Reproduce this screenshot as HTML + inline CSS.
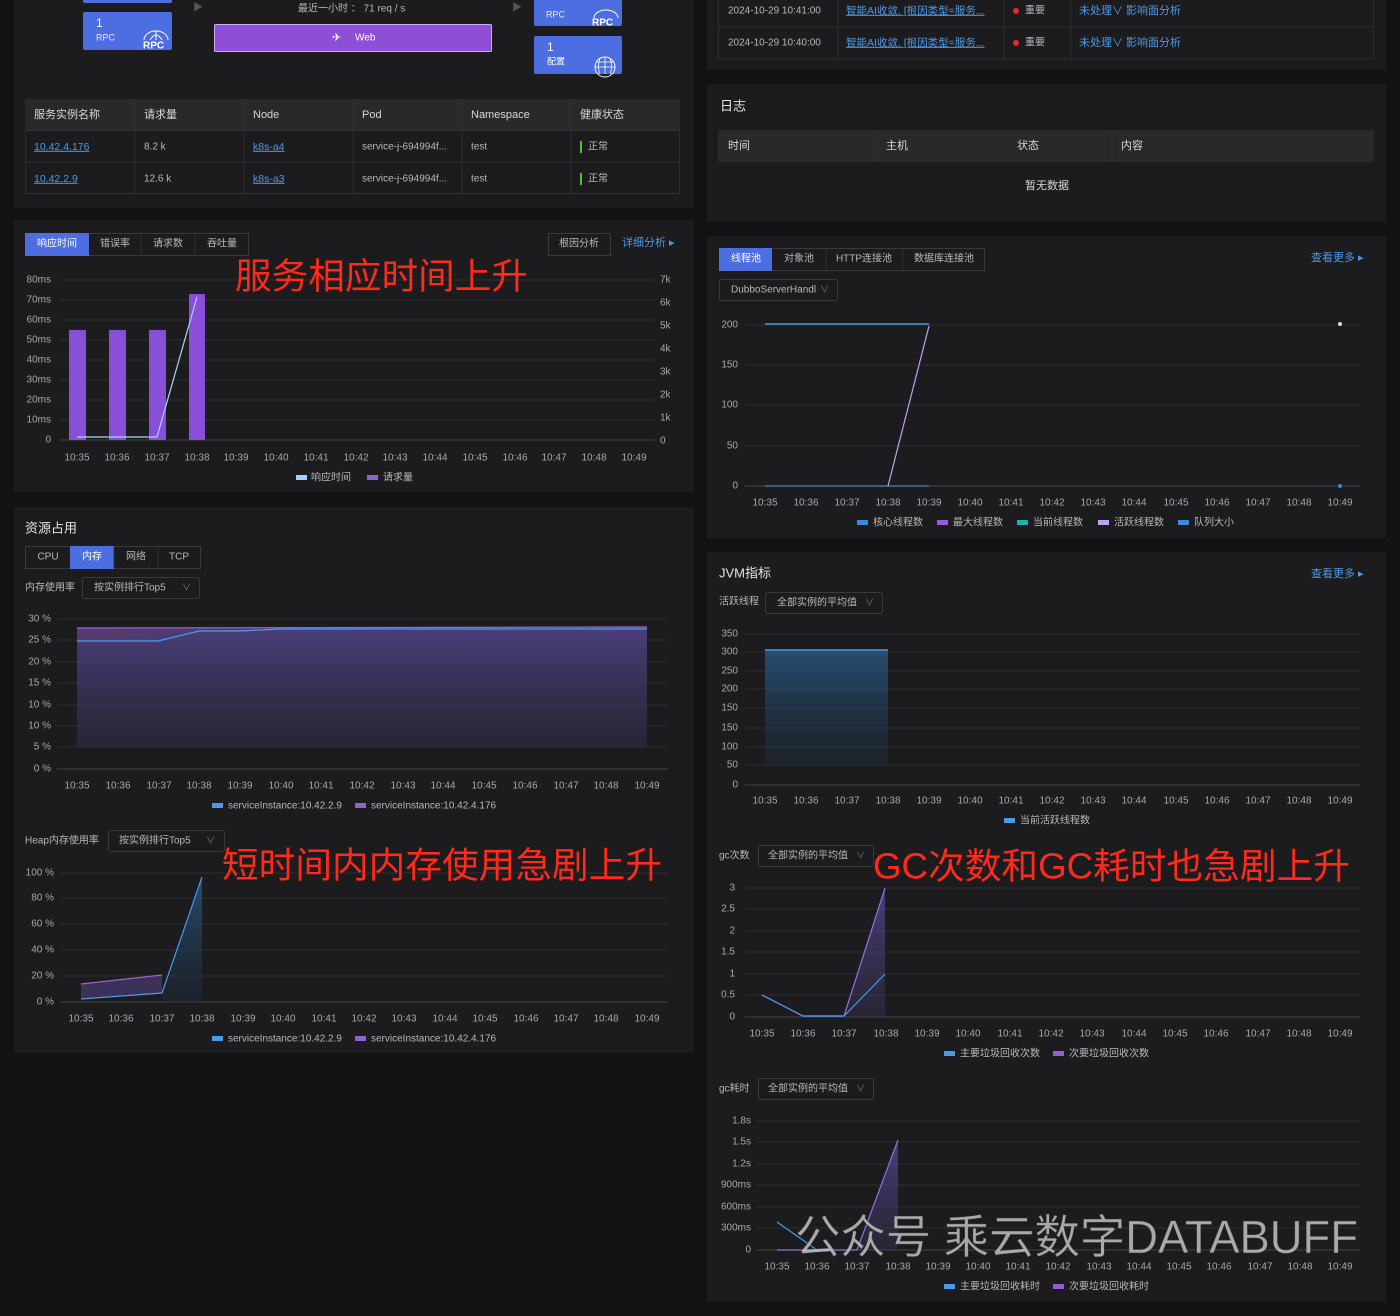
<!DOCTYPE html>
<html><head><meta charset="utf-8"><style>
html,body{margin:0;padding:0;background:#111214;}
svg{display:block;font-family:"Liberation Sans","Noto Sans CJK SC",sans-serif;}
text{dominant-baseline:middle;}
.t{fill:#d8d8d8;font-size:11px}
.s{fill:#b8b8b8;font-size:10px}
.ax{fill:#a8a8a8;font-size:10px}
.h{fill:#e6e6e6;font-size:13px}
.lk{fill:#4a9ae8;font-size:10.5px;text-decoration:underline}
.bl{fill:#4a9ae8;font-size:11px}
.red{fill:#ff2a1a;font-size:36px}
.g{stroke:#2e2e31;stroke-width:1}
</style></head><body>
<svg width="1400" height="1316" viewBox="0 0 1400 1316">
<rect width="1400" height="1316" fill="#111214"/>
<g fill="#1c1c1e">
<rect x="14" y="0" width="680" height="208"/>
<rect x="14" y="220" width="680" height="272"/>
<rect x="14" y="507" width="680" height="546"/>
<rect x="707" y="0" width="679" height="70"/>
<rect x="707" y="84" width="679" height="138"/>
<rect x="707" y="236" width="679" height="302"/>
<rect x="707" y="552" width="679" height="750"/>
</g>

<rect x="83" y="-10" width="89" height="13" rx="2" fill="#4d6ee0"/>
<rect x="83" y="12" width="89" height="38" rx="2" fill="#4d6ee0"/>
<text x="96" y="24" fill="#fff" font-size="12">1</text>
<text x="96" y="38" fill="#e8ecff" font-size="9">RPC</text>
<text x="143" y="46" fill="#fff" font-size="10" font-weight="bold">RPC</text>
<path d="M144 40 a12 9 0 0 1 24 0 M150 40 q6 -10 12 0 M156 31 v9" stroke="#fff" fill="none" stroke-width="1"/>
<text x="193" y="8" fill="#555" font-size="10">▶</text>
<text x="512" y="8" fill="#555" font-size="10">▶</text>
<text x="298" y="9" class="s" fill="#999">最近一小时 ： 71 req / s</text>
<rect x="214.5" y="24.5" width="277" height="27" rx="1" fill="#8e4fd6" stroke="#c8b0f0"/>
<text x="332" y="38" fill="#fff" font-size="11">✈</text>
<text x="355" y="38" fill="#fff" font-size="10">Web</text>
<rect x="534" y="-10" width="88" height="36" rx="2" fill="#4d6ee0"/>
<text x="546" y="15" fill="#e8ecff" font-size="9">RPC</text>
<text x="592" y="23" fill="#fff" font-size="10" font-weight="bold">RPC</text>
<path d="M594 18 a12 8 0 0 1 24 0" stroke="#fff" fill="none"/>
<rect x="534" y="36" width="88" height="38" rx="2" fill="#4d6ee0"/>
<text x="547" y="48" fill="#fff" font-size="12">1</text>
<text x="547" y="62" fill="#fff" font-size="9">配置</text>
<circle cx="605" cy="67" r="10" fill="none" stroke="#fff"/>
<path d="M595 67 h20 M605 57 v17 M597 62 h16 M600 58 q-3 9 0 16 M610 58 q3 9 0 16" stroke="#fff" fill="none" stroke-width="0.8"/>

<rect x="25" y="99" width="655" height="31" fill="#29292b"/>
<rect x="25.5" y="130.5" width="654" height="63" fill="none" stroke="#2e2e31"/>
<line x1="25" y1="162" x2="680" y2="162" class="g"/>
<g class="g"><line x1="135" y1="99" x2="135" y2="194"/><line x1="244" y1="99" x2="244" y2="194"/><line x1="353" y1="99" x2="353" y2="194"/><line x1="462" y1="99" x2="462" y2="194"/><line x1="571" y1="99" x2="571" y2="194"/></g>
<g class="t"><text x="34" y="115">服务实例名称</text><text x="144" y="115">请求量</text><text x="253" y="115">Node</text><text x="362" y="115">Pod</text><text x="471" y="115">Namespace</text><text x="580" y="115">健康状态</text></g>
<text x="34" y="147" class="lk">10.42.4.176</text><text x="144" y="147" class="s" fill="#ddd">8.2 k</text><text x="253" y="147" class="lk">k8s-a4</text><text x="362" y="147" class="s" fill="#ddd">service-j-694994f...</text><text x="471" y="147" class="s" fill="#ddd">test</text>
<rect x="580" y="141" width="2" height="12" fill="#52c41a"/><text x="588" y="147" class="s" fill="#ddd">正常</text>
<text x="34" y="179" class="lk">10.42.2.9</text><text x="144" y="179" class="s" fill="#ddd">12.6 k</text><text x="253" y="179" class="lk">k8s-a3</text><text x="362" y="179" class="s" fill="#ddd">service-j-694994f...</text><text x="471" y="179" class="s" fill="#ddd">test</text>
<rect x="580" y="173" width="2" height="12" fill="#52c41a"/><text x="588" y="179" class="s" fill="#ddd">正常</text>

<rect x="25.5" y="233.5" width="223" height="22" fill="none" stroke="#3a3a3d"/>
<rect x="25" y="233" width="64" height="23" fill="#4d6ee0"/>
<g class="g" stroke="#3a3a3d"><line x1="141" y1="234" x2="141" y2="255"/><line x1="195" y1="234" x2="195" y2="255"/></g>
<g class="s" fill="#ccc" text-anchor="middle"><text x="57" y="244" fill="#fff">响应时间</text><text x="115" y="244">错误率</text><text x="168" y="244">请求数</text><text x="222" y="244">吞吐量</text></g>
<rect x="548.5" y="233.5" width="62" height="22" fill="none" stroke="#3a3a3d"/>
<text x="579" y="244" class="s" fill="#ccc" text-anchor="middle">根因分析</text>
<text x="622" y="243" class="bl">详细分析 ▸</text>
<g class="g"><line x1="60" y1="280" x2="655" y2="280"/><line x1="60" y1="300" x2="655" y2="300"/><line x1="60" y1="320" x2="655" y2="320"/><line x1="60" y1="340" x2="655" y2="340"/><line x1="60" y1="360" x2="655" y2="360"/><line x1="60" y1="380" x2="655" y2="380"/><line x1="60" y1="400" x2="655" y2="400"/><line x1="60" y1="420" x2="655" y2="420"/><line x1="60" y1="440" x2="655" y2="440" stroke="#444"/></g>
<g class="ax" text-anchor="end"><text x="51" y="280">80ms</text><text x="51" y="300">70ms</text><text x="51" y="320">60ms</text><text x="51" y="340">50ms</text><text x="51" y="360">40ms</text><text x="51" y="380">30ms</text><text x="51" y="400">20ms</text><text x="51" y="420">10ms</text><text x="51" y="440">0</text></g>
<g class="ax"><text x="660" y="280">7k</text><text x="660" y="303">6k</text><text x="660" y="326">5k</text><text x="660" y="349">4k</text><text x="660" y="372">3k</text><text x="660" y="395">2k</text><text x="660" y="418">1k</text><text x="660" y="441">0</text></g>
<g class="ax" text-anchor="middle"><text x="77" y="458">10:35</text><text x="117" y="458">10:36</text><text x="157" y="458">10:37</text><text x="197" y="458">10:38</text><text x="236" y="458">10:39</text><text x="276" y="458">10:40</text><text x="316" y="458">10:41</text><text x="356" y="458">10:42</text><text x="395" y="458">10:43</text><text x="435" y="458">10:44</text><text x="475" y="458">10:45</text><text x="515" y="458">10:46</text><text x="554" y="458">10:47</text><text x="594" y="458">10:48</text><text x="634" y="458">10:49</text></g>
<g fill="#8a4fd8"><rect x="69" y="330" width="17" height="110"/><rect x="109" y="330" width="17" height="110"/><rect x="149" y="330" width="17" height="110"/><rect x="189" y="294" width="16" height="146"/></g>
<polyline points="77,437 157,437 197,297" fill="none" stroke="#a8d4ff" stroke-width="1.2"/>
<rect x="296" y="475" width="11" height="5" fill="#9fd0ff"/><text x="311" y="478" class="s">响应时间</text>
<rect x="367" y="475" width="11" height="5" fill="#9060d0"/><text x="383" y="478" class="s">请求量</text>
<text x="235" y="279" class="red" textLength="293" lengthAdjust="spacingAndGlyphs">服务相应时间上升</text>

<text x="25" y="529" class="h">资源占用</text>
<rect x="25.5" y="546.5" width="175" height="22" fill="none" stroke="#3a3a3d"/>
<rect x="70" y="546" width="44" height="23" fill="#4d6ee0"/>
<g class="g" stroke="#3a3a3d"><line x1="114" y1="547" x2="114" y2="568"/><line x1="158" y1="547" x2="158" y2="568"/></g>
<g class="s" fill="#ccc" text-anchor="middle"><text x="48" y="557">CPU</text><text x="92" y="557" fill="#fff">内存</text><text x="136" y="557">网络</text><text x="179" y="557">TCP</text></g>
<text x="25" y="588" class="s" fill="#ddd">内存使用率</text>
<rect x="82.5" y="577.5" width="117" height="21" rx="2" fill="none" stroke="#3a3a3d"/>
<text x="94" y="588" class="s" fill="#bbb">按实例排行Top5</text><text x="182" y="588" fill="#777" font-size="9">∨</text>
<g class="g"><line x1="57" y1="619" x2="668" y2="619"/><line x1="57" y1="640" x2="668" y2="640"/><line x1="57" y1="662" x2="668" y2="662"/><line x1="57" y1="683" x2="668" y2="683"/><line x1="57" y1="705" x2="668" y2="705"/><line x1="57" y1="726" x2="668" y2="726"/><line x1="57" y1="747" x2="668" y2="747"/><line x1="57" y1="769" x2="668" y2="769" stroke="#444"/></g>
<g class="ax" text-anchor="end"><text x="51" y="619">30 %</text><text x="51" y="640">25 %</text><text x="51" y="662">20 %</text><text x="51" y="683">15 %</text><text x="51" y="705">10 %</text><text x="51" y="726">10 %</text><text x="51" y="747">5 %</text><text x="51" y="769">0 %</text></g>
<defs>
<linearGradient id="pg" x1="0" y1="0" x2="0" y2="1"><stop offset="0" stop-color="#5a4a9a" stop-opacity="0.75"/><stop offset="1" stop-color="#3a3660" stop-opacity="0.35"/></linearGradient>
<linearGradient id="bg2" x1="0" y1="0" x2="0" y2="1"><stop offset="0" stop-color="#2a5a88" stop-opacity="0.8"/><stop offset="1" stop-color="#1e3048" stop-opacity="0.3"/></linearGradient>
</defs>
<polygon points="77,628 647,627 647,747 77,747" fill="url(#pg)"/>
<polygon points="77,628 158,628 199,631 77,641" fill="#5a3a6a" opacity="0.7"/>
<polyline points="77,628 647,627" fill="none" stroke="#a060d0" stroke-width="1.2"/>
<polyline points="77,641 158,641 199,631 240,631 281,629 647,629" fill="none" stroke="#4a9ae8" stroke-width="1.2"/>
<g class="ax" text-anchor="middle"><text x="77" y="786">10:35</text><text x="118" y="786">10:36</text><text x="159" y="786">10:37</text><text x="199" y="786">10:38</text><text x="240" y="786">10:39</text><text x="281" y="786">10:40</text><text x="321" y="786">10:41</text><text x="362" y="786">10:42</text><text x="403" y="786">10:43</text><text x="443" y="786">10:44</text><text x="484" y="786">10:45</text><text x="525" y="786">10:46</text><text x="566" y="786">10:47</text><text x="606" y="786">10:48</text><text x="647" y="786">10:49</text></g>
<rect x="212" y="803" width="11" height="5" fill="#4a9ae8"/><text x="228" y="806" class="s">serviceInstance:10.42.2.9</text>
<rect x="355" y="803" width="11" height="5" fill="#9060d0"/><text x="371" y="806" class="s">serviceInstance:10.42.4.176</text>

<text x="25" y="841" class="s" fill="#ddd">Heap内存使用率</text>
<rect x="108.5" y="830.5" width="116" height="21" rx="2" fill="none" stroke="#3a3a3d"/>
<text x="119" y="841" class="s" fill="#bbb">按实例排行Top5</text><text x="206" y="841" fill="#777" font-size="9">∨</text>
<g class="g"><line x1="60" y1="873" x2="668" y2="873"/><line x1="60" y1="898" x2="668" y2="898"/><line x1="60" y1="924" x2="668" y2="924"/><line x1="60" y1="950" x2="668" y2="950"/><line x1="60" y1="976" x2="668" y2="976"/><line x1="60" y1="1002" x2="668" y2="1002" stroke="#444"/></g>
<g class="ax" text-anchor="end"><text x="54" y="873">100 %</text><text x="54" y="898">80 %</text><text x="54" y="924">60 %</text><text x="54" y="950">40 %</text><text x="54" y="976">20 %</text><text x="54" y="1002">0 %</text></g>
<polygon points="81,984 162,975 162,993 81,999" fill="#4a3a70" opacity="0.7"/>
<polygon points="162,993 202,877 202,1002 162,1002" fill="url(#bg2)"/>
<polyline points="81,984 162,975" fill="none" stroke="#a060d0" stroke-width="1.2"/>
<polyline points="81,999 162,993 202,877" fill="none" stroke="#4a9ae8" stroke-width="1.2"/>
<g class="ax" text-anchor="middle"><text x="81" y="1019">10:35</text><text x="121" y="1019">10:36</text><text x="162" y="1019">10:37</text><text x="202" y="1019">10:38</text><text x="243" y="1019">10:39</text><text x="283" y="1019">10:40</text><text x="324" y="1019">10:41</text><text x="364" y="1019">10:42</text><text x="404" y="1019">10:43</text><text x="445" y="1019">10:44</text><text x="485" y="1019">10:45</text><text x="526" y="1019">10:46</text><text x="566" y="1019">10:47</text><text x="606" y="1019">10:48</text><text x="647" y="1019">10:49</text></g>
<rect x="212" y="1036" width="11" height="5" fill="#4a9ae8"/><text x="228" y="1039" class="s">serviceInstance:10.42.2.9</text>
<rect x="355" y="1036" width="11" height="5" fill="#9060d0"/><text x="371" y="1039" class="s">serviceInstance:10.42.4.176</text>
<text x="222" y="868" class="red" textLength="440" lengthAdjust="spacingAndGlyphs">短时间内内存使用急剧上升</text>

<rect x="718.5" y="-5" width="655" height="64" fill="none" stroke="#2e2e31"/>
<line x1="718" y1="27" x2="1374" y2="27" class="g"/>
<g class="g"><line x1="838" y1="0" x2="838" y2="59"/><line x1="1004" y1="0" x2="1004" y2="59"/><line x1="1071" y1="0" x2="1071" y2="59"/></g>
<text x="728" y="11" class="s" fill="#eee">2024-10-29 10:41:00</text><text x="846" y="11" class="lk" font-size="10">智能AI收敛. [根因类型=服务...</text>
<circle cx="1016" cy="11" r="3" fill="#e02d2d"/><text x="1025" y="11" class="s" fill="#eee">重要</text><text x="1079" y="11" class="bl" font-size="10">未处理∨  影响面分析</text>
<text x="728" y="43" class="s" fill="#eee">2024-10-29 10:40:00</text><text x="846" y="43" class="lk" font-size="10">智能AI收敛. [根因类型=服务...</text>
<circle cx="1016" cy="43" r="3" fill="#e02d2d"/><text x="1025" y="43" class="s" fill="#eee">重要</text><text x="1079" y="43" class="bl" font-size="10">未处理∨  影响面分析</text>

<text x="720" y="107" class="h">日志</text>
<rect x="718" y="130" width="656" height="32" fill="#29292b"/>
<g class="g" stroke="#202022"><line x1="878" y1="130" x2="878" y2="162"/><line x1="1112" y1="130" x2="1112" y2="162"/></g>
<g class="t"><text x="728" y="146">时间</text><text x="886" y="146">主机</text><text x="1017" y="146">状态</text><text x="1121" y="146">内容</text></g>
<text x="1047" y="186" class="t" text-anchor="middle">暂无数据</text>

<rect x="719.5" y="248.5" width="265" height="22" fill="none" stroke="#3a3a3d"/>
<rect x="719" y="248" width="53" height="23" fill="#4d6ee0"/>
<g class="g" stroke="#3a3a3d"><line x1="826" y1="249" x2="826" y2="270"/><line x1="903" y1="249" x2="903" y2="270"/></g>
<g class="s" fill="#ccc" text-anchor="middle"><text x="746" y="259" fill="#fff">线程池</text><text x="799" y="259">对象池</text><text x="864" y="259">HTTP连接池</text><text x="944" y="259">数据库连接池</text></g>
<text x="1311" y="258" class="bl">查看更多 ▸</text>
<rect x="719.5" y="279.5" width="118" height="21" rx="2" fill="none" stroke="#3a3a3d"/>
<text x="731" y="290" class="s" fill="#bbb">DubboServerHandl</text><text x="820" y="290" fill="#777" font-size="9">∨</text>
<g class="g"><line x1="745" y1="325" x2="1360" y2="325"/><line x1="745" y1="365" x2="1360" y2="365"/><line x1="745" y1="405" x2="1360" y2="405"/><line x1="745" y1="446" x2="1360" y2="446"/><line x1="745" y1="486" x2="1360" y2="486" stroke="#444"/></g>
<g class="ax" text-anchor="end"><text x="738" y="325">200</text><text x="738" y="365">150</text><text x="738" y="405">100</text><text x="738" y="446">50</text><text x="738" y="486">0</text></g>
<polyline points="765,324 929,324" stroke="#5ab0e8" fill="none" stroke-width="1.2"/>
<polyline points="765,486 929,486" stroke="#3a8ad8" fill="none" stroke-width="1.2"/>
<polyline points="888,486 929,326" stroke="#c0a0f0" fill="none" stroke-width="1.2"/>
<circle cx="1340" cy="324" r="2" fill="#ddd"/><circle cx="1340" cy="486" r="2" fill="#3a8ad8"/>
<g class="ax" text-anchor="middle"><text x="765" y="503">10:35</text><text x="806" y="503">10:36</text><text x="847" y="503">10:37</text><text x="888" y="503">10:38</text><text x="929" y="503">10:39</text><text x="970" y="503">10:40</text><text x="1011" y="503">10:41</text><text x="1052" y="503">10:42</text><text x="1093" y="503">10:43</text><text x="1134" y="503">10:44</text><text x="1176" y="503">10:45</text><text x="1217" y="503">10:46</text><text x="1258" y="503">10:47</text><text x="1299" y="503">10:48</text><text x="1340" y="503">10:49</text></g>
<rect x="857" y="520" width="11" height="5" fill="#3a8ad8"/><text x="873" y="523" class="s">核心线程数</text>
<rect x="937" y="520" width="11" height="5" fill="#9060d0"/><text x="953" y="523" class="s">最大线程数</text>
<rect x="1017" y="520" width="11" height="5" fill="#20b0b0"/><text x="1033" y="523" class="s">当前线程数</text>
<rect x="1098" y="520" width="11" height="5" fill="#c0a0f0"/><text x="1114" y="523" class="s">活跃线程数</text>
<rect x="1178" y="520" width="11" height="5" fill="#3a8ad8"/><text x="1194" y="523" class="s">队列大小</text>

<text x="719" y="574" class="h">JVM指标</text>
<text x="1311" y="574" class="bl">查看更多 ▸</text>
<text x="719" y="602" class="s" fill="#ddd">活跃线程</text>
<rect x="765.5" y="592.5" width="117" height="21" rx="2" fill="none" stroke="#3a3a3d"/>
<text x="777" y="603" class="s" fill="#bbb">全部实例的平均值</text><text x="865" y="603" fill="#777" font-size="9">∨</text>
<g class="g"><line x1="745" y1="634" x2="1360" y2="634"/><line x1="745" y1="652" x2="1360" y2="652"/><line x1="745" y1="671" x2="1360" y2="671"/><line x1="745" y1="689" x2="1360" y2="689"/><line x1="745" y1="708" x2="1360" y2="708"/><line x1="745" y1="728" x2="1360" y2="728"/><line x1="745" y1="747" x2="1360" y2="747"/><line x1="745" y1="765" x2="1360" y2="765"/><line x1="745" y1="785" x2="1360" y2="785" stroke="#444"/></g>
<g class="ax" text-anchor="end"><text x="738" y="634">350</text><text x="738" y="652">300</text><text x="738" y="671">250</text><text x="738" y="689">200</text><text x="738" y="708">150</text><text x="738" y="728">150</text><text x="738" y="747">100</text><text x="738" y="765">50</text><text x="738" y="785">0</text></g>
<rect x="765" y="650" width="123" height="115" fill="url(#bg2)"/>
<line x1="765" y1="650" x2="888" y2="650" stroke="#4a9ae8" stroke-width="1.5"/>
<g class="ax" text-anchor="middle"><text x="765" y="801">10:35</text><text x="806" y="801">10:36</text><text x="847" y="801">10:37</text><text x="888" y="801">10:38</text><text x="929" y="801">10:39</text><text x="970" y="801">10:40</text><text x="1011" y="801">10:41</text><text x="1052" y="801">10:42</text><text x="1093" y="801">10:43</text><text x="1134" y="801">10:44</text><text x="1176" y="801">10:45</text><text x="1217" y="801">10:46</text><text x="1258" y="801">10:47</text><text x="1299" y="801">10:48</text><text x="1340" y="801">10:49</text></g>
<rect x="1004" y="818" width="11" height="5" fill="#4a9ae8"/><text x="1020" y="821" class="s">当前活跃线程数</text>

<text x="719" y="856" class="s" fill="#ddd">gc次数</text>
<rect x="758.5" y="845.5" width="115" height="21" rx="2" fill="none" stroke="#3a3a3d"/>
<text x="768" y="856" class="s" fill="#bbb">全部实例的平均值</text><text x="856" y="856" fill="#777" font-size="9">∨</text>
<g class="g"><line x1="745" y1="888" x2="1360" y2="888"/><line x1="745" y1="909" x2="1360" y2="909"/><line x1="745" y1="931" x2="1360" y2="931"/><line x1="745" y1="952" x2="1360" y2="952"/><line x1="745" y1="974" x2="1360" y2="974"/><line x1="745" y1="995" x2="1360" y2="995"/><line x1="745" y1="1017" x2="1360" y2="1017" stroke="#444"/></g>
<g class="ax" text-anchor="end"><text x="735" y="888">3</text><text x="735" y="909">2.5</text><text x="735" y="931">2</text><text x="735" y="952">1.5</text><text x="735" y="974">1</text><text x="735" y="995">0.5</text><text x="735" y="1017">0</text></g>
<polygon points="844,1016 885,888 885,1017" fill="url(#pg)"/>
<polyline points="762,995 803,1016 844,1016 885,888" stroke="#9a70e0" fill="none" stroke-width="1.2"/>
<polyline points="762,995 803,1016 844,1016 885,974" stroke="#4a9ae8" fill="none" stroke-width="1.2"/>
<g class="ax" text-anchor="middle"><text x="762" y="1034">10:35</text><text x="803" y="1034">10:36</text><text x="844" y="1034">10:37</text><text x="886" y="1034">10:38</text><text x="927" y="1034">10:39</text><text x="968" y="1034">10:40</text><text x="1010" y="1034">10:41</text><text x="1051" y="1034">10:42</text><text x="1092" y="1034">10:43</text><text x="1134" y="1034">10:44</text><text x="1175" y="1034">10:45</text><text x="1216" y="1034">10:46</text><text x="1258" y="1034">10:47</text><text x="1299" y="1034">10:48</text><text x="1340" y="1034">10:49</text></g>
<rect x="944" y="1051" width="11" height="5" fill="#4a9ae8"/><text x="960" y="1054" class="s">主要垃圾回收次数</text>
<rect x="1053" y="1051" width="11" height="5" fill="#9060d0"/><text x="1069" y="1054" class="s">次要垃圾回收次数</text>
<text x="873" y="869" class="red" textLength="477" lengthAdjust="spacingAndGlyphs">GC次数和GC耗时也急剧上升</text>

<text x="719" y="1089" class="s" fill="#ddd">gc耗时</text>
<rect x="758.5" y="1078.5" width="115" height="21" rx="2" fill="none" stroke="#3a3a3d"/>
<text x="768" y="1089" class="s" fill="#bbb">全部实例的平均值</text><text x="856" y="1089" fill="#777" font-size="9">∨</text>
<g class="g"><line x1="757" y1="1121" x2="1360" y2="1121"/><line x1="757" y1="1142" x2="1360" y2="1142"/><line x1="757" y1="1164" x2="1360" y2="1164"/><line x1="757" y1="1185" x2="1360" y2="1185"/><line x1="757" y1="1207" x2="1360" y2="1207"/><line x1="757" y1="1228" x2="1360" y2="1228"/><line x1="757" y1="1250" x2="1360" y2="1250" stroke="#444"/></g>
<g class="ax" text-anchor="end"><text x="751" y="1121">1.8s</text><text x="751" y="1142">1.5s</text><text x="751" y="1164">1.2s</text><text x="751" y="1185">900ms</text><text x="751" y="1207">600ms</text><text x="751" y="1228">300ms</text><text x="751" y="1250">0</text></g>
<polygon points="857,1250 898,1140 898,1250" fill="url(#pg)"/>
<polyline points="777,1250 857,1250 898,1140" stroke="#9a70e0" fill="none" stroke-width="1.2"/>
<polyline points="777,1222 817,1250" stroke="#4a9ae8" fill="none" stroke-width="1.2"/>
<g class="ax" text-anchor="middle"><text x="777" y="1267">10:35</text><text x="817" y="1267">10:36</text><text x="857" y="1267">10:37</text><text x="898" y="1267">10:38</text><text x="938" y="1267">10:39</text><text x="978" y="1267">10:40</text><text x="1018" y="1267">10:41</text><text x="1058" y="1267">10:42</text><text x="1099" y="1267">10:43</text><text x="1139" y="1267">10:44</text><text x="1179" y="1267">10:45</text><text x="1219" y="1267">10:46</text><text x="1260" y="1267">10:47</text><text x="1300" y="1267">10:48</text><text x="1340" y="1267">10:49</text></g>
<rect x="944" y="1284" width="11" height="5" fill="#4a9ae8"/><text x="960" y="1287" class="s">主要垃圾回收耗时</text>
<rect x="1053" y="1284" width="11" height="5" fill="#9060d0"/><text x="1069" y="1287" class="s">次要垃圾回收耗时</text>
<text x="795" y="1241" fill="#c8c8c8" fill-opacity="0.82" font-size="46" stroke="#333" stroke-width="0.5" textLength="563" lengthAdjust="spacingAndGlyphs">公众号 乘云数字DATABUFF</text>
</svg>
</body></html>
